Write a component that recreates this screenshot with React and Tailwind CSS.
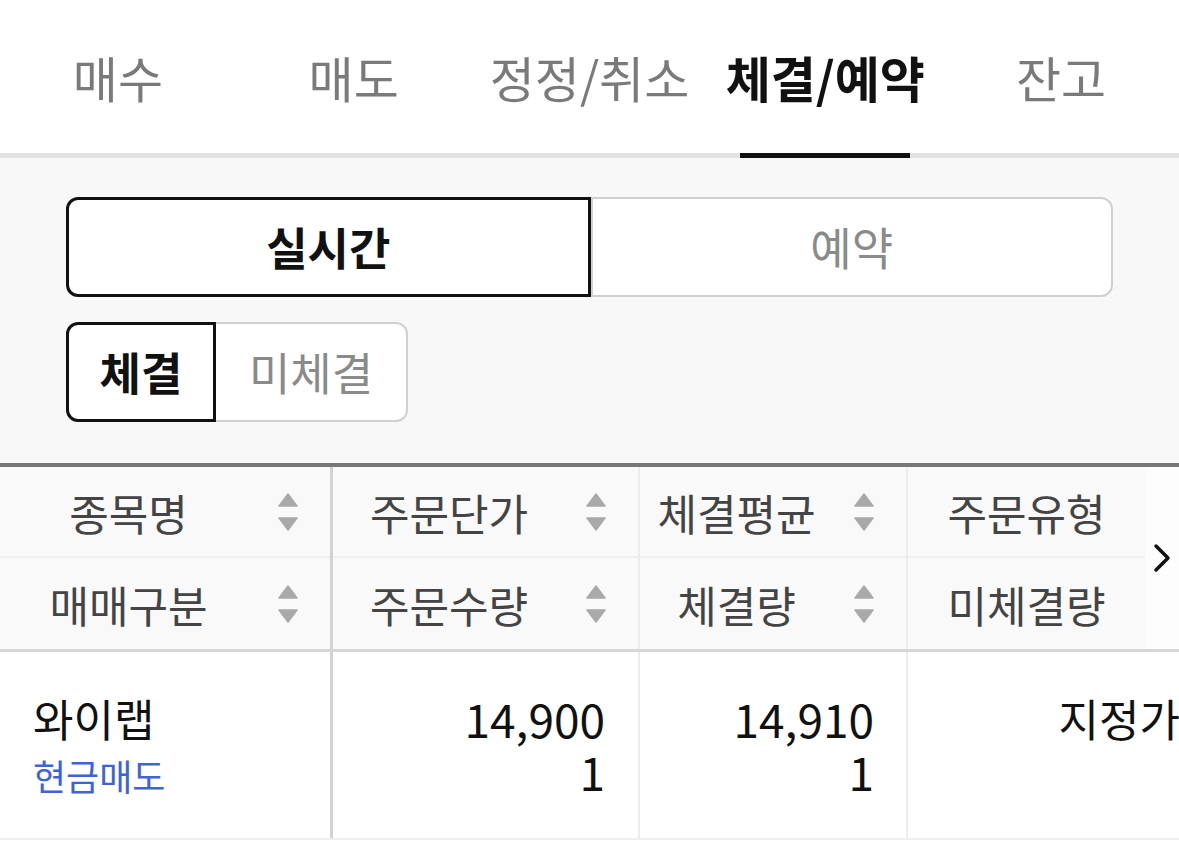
import React from 'react';

const font = { fontFamily: '"Noto Sans CJK KR", "Noto Sans", sans-serif' };

const tabs = ['매수', '매도', '정정/취소', '체결/예약', '잔고'];

const SortIcon = () => (
    <svg width="20" height="38" viewBox="0 0 20 38" className="shrink-0 ml-[21px] mr-[32px]">
        <path d="M10 1 L19 13 L1 13 Z" fill="#a9a9a9" strokeLinejoin="round" stroke="#a9a9a9" strokeWidth="1.5" />
        <path d="M1 25 L19 25 L10 37 Z" fill="#a9a9a9" strokeLinejoin="round" stroke="#a9a9a9" strokeWidth="1.5" />
    </svg>
);

const HeadCell = ({ label, sort, bottom }) => (
    <div className={`flex items-center h-[91px] ${bottom ? '' : 'border-b-2 border-[#f0f0f0]'}`}>
        <span className="flex-1 text-center text-[43px] leading-[52px] text-[#444]">{label}</span>
        {sort && <SortIcon />}
    </div>
);

const columns = [
    { w: 'w-[333px]', border: 'border-r-[3px] border-[#d2d2d2]', top: '종목명', bottom: '매매구분', sort: true },
    { w: 'w-[307px]', border: 'border-r-2 border-[#ececec]', top: '주문단가', bottom: '주문수량', sort: true },
    { w: 'w-[268px]', border: 'border-r-2 border-[#ececec]', top: '체결평균', bottom: '체결량', sort: true },
    { w: 'w-[237px]', border: '', top: '주문유형', bottom: '미체결량', sort: false },
];

export default function App() {
    return (
        <div className="w-[1179px] h-[851px] overflow-hidden bg-white" style={font}>
            {/* top tabs */}
            <div className="flex">
                {tabs.map((t, i) => (
                    <div key={t} className="flex-1 flex flex-col">
                        <div className={`h-[153px] flex items-center justify-center text-[49px] ${i === 3 ? 'font-bold text-[#111]' : 'text-[#7a7a7a]'}`}>
                            {t}
                        </div>
                        <div className="h-[5px] bg-[#e2e2e2] flex justify-center">
                            {i === 3 && <div className="w-[170px] h-[5px] bg-[#111]" />}
                        </div>
                    </div>
                ))}
            </div>

            {/* filters */}
            <div className="bg-[#f8f8f8] px-[66px] pt-[39px] pb-[41px]">
                <div className="flex h-[100px]">
                    <button className="flex-1 bg-white border-[3px] border-[#111] rounded-l-[12px] text-[45px] font-bold text-[#111]">
                        실시간
                    </button>
                    <button className="flex-1 bg-white border-2 border-[#d0d0d0] rounded-r-[12px] text-[45px] text-[#8a8a8a]">
                        예약
                    </button>
                </div>
                <div className="flex h-[100px] mt-[25px]">
                    <button className="w-[150px] bg-white border-[3px] border-[#111] rounded-l-[12px] text-[45px] font-bold text-[#111]">
                        체결
                    </button>
                    <button className="w-[192px] bg-white border-2 border-l-0 border-[#d0d0d0] rounded-r-[12px] text-[45px] text-[#8a8a8a]">
                        미체결
                    </button>
                </div>
            </div>

            {/* table */}
            <div className="border-t-4 border-[#787878]">
                <div className="flex bg-[#f9f9f9] border-b-[3px] border-[#d6d6d6]">
                    {columns.map((c) => (
                        <div key={c.top} className={`${c.w} shrink-0 flex flex-col ${c.border}`}>
                            <HeadCell label={c.top} sort={c.sort} />
                            <HeadCell label={c.bottom} sort={c.sort} bottom />
                        </div>
                    ))}
                    <div className="flex-1 bg-[#fdfdfd] flex items-center justify-center">
                        <svg width="22" height="32" viewBox="0 0 22 32">
                            <path d="M5 4 L17 16 L5 28" fill="none" stroke="#111" strokeWidth="3.5" strokeLinecap="round" strokeLinejoin="round" />
                        </svg>
                    </div>
                </div>

                <div className="flex h-[188px] border-b-2 border-[#efefef]">
                    <div className="w-[333px] shrink-0 border-r-[3px] border-[#d2d2d2] flex flex-col justify-center pl-[33px]">
                        <span className="text-[44px] leading-[54px] text-[#111]">와이랩</span>
                        <span className="text-[36px] leading-[48px] mt-[6px] text-[#3f63d6]">현금매도</span>
                    </div>
                    <div className="w-[307px] shrink-0 border-r-2 border-[#ececec] flex flex-col justify-center items-end pr-[33px] text-[46px] leading-[53px] text-[#111]">
                        <span>14,900</span>
                        <span>1</span>
                    </div>
                    <div className="w-[268px] shrink-0 border-r-2 border-[#ececec] flex flex-col justify-center items-end pr-[32px] text-[46px] leading-[53px] text-[#111]">
                        <span>14,910</span>
                        <span>1</span>
                    </div>
                    <div className="w-[310px] shrink-0 flex flex-col justify-center items-end pr-[38px] text-[44px] leading-[53px] text-[#111]">
                        <span>지정가</span>
                        <span className="invisible">-</span>
                    </div>
                </div>
            </div>
        </div>
    );
}
